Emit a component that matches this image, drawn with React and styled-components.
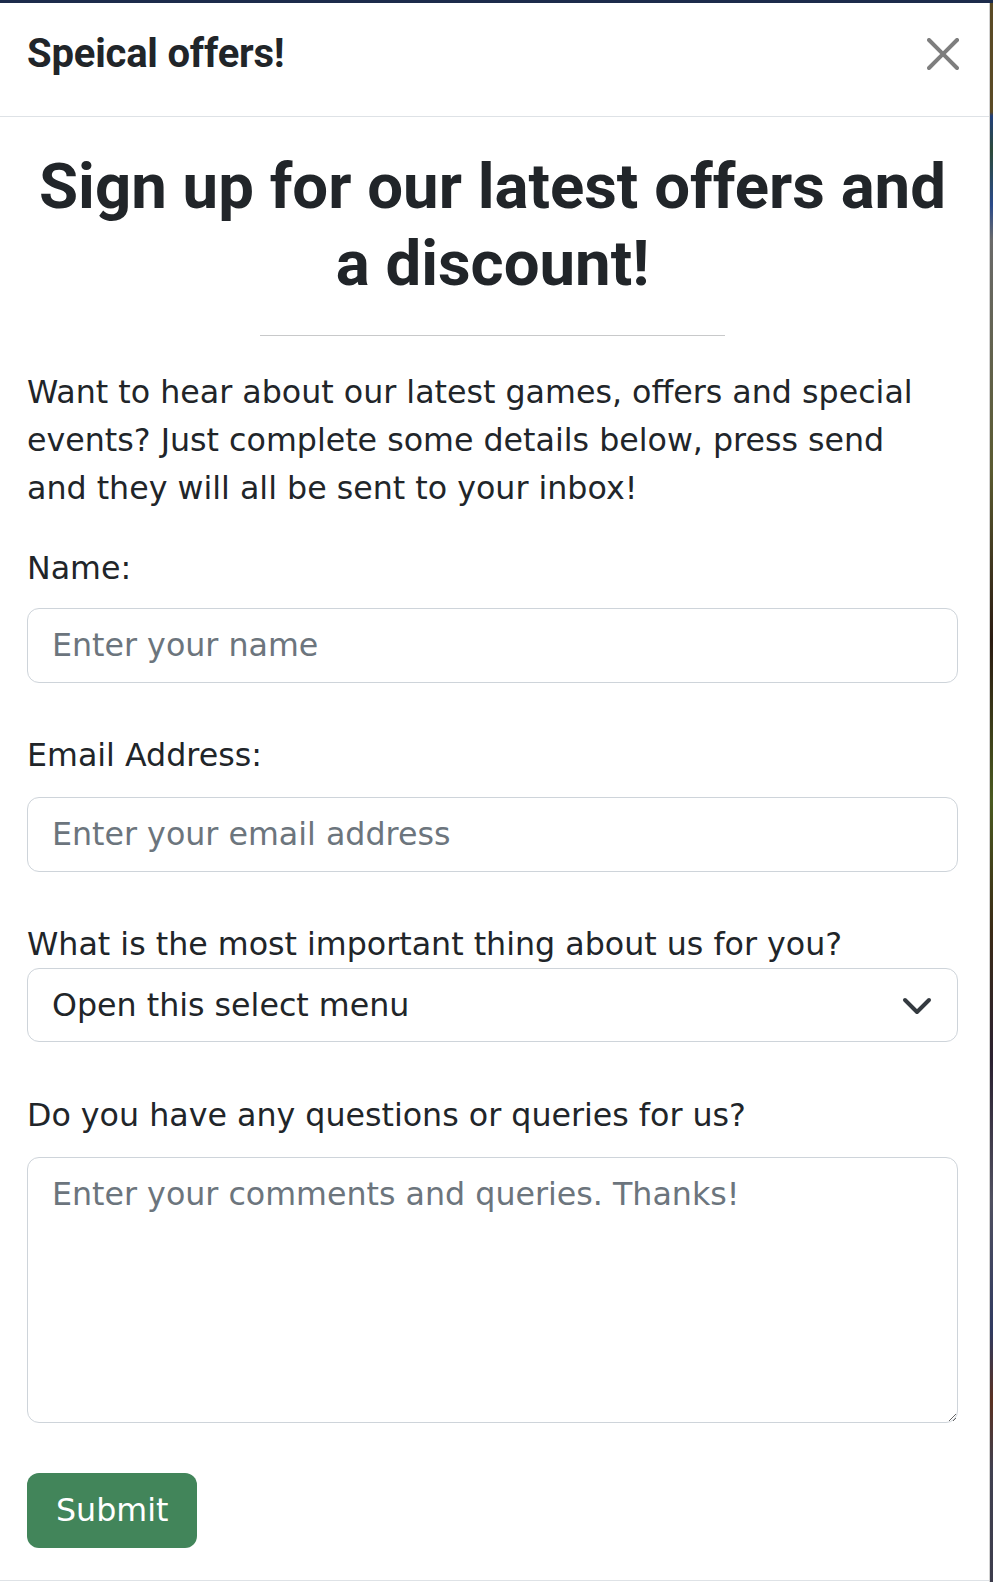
import React from 'react'
import styled, { createGlobalStyle } from 'styled-components'


const GlobalStyle = createGlobalStyle`
    html, body {
        margin: 0;
        height: 1582px;
        overflow: hidden;
    }

    body {
        background: linear-gradient(
            to bottom,
            #1c2b4b 0px, #1c2b4b 3px,
            #5a4a25 3px, #5a4a25 112px,
            #22407a 116px, #2c4a3a 150px,
            #2a4a8a 205px, #6a6a6a 240px,
            #5a5a30 470px, #2a1a10 640px,
            #4a5a20 800px, #3a2a15 930px,
            #2a2030 1060px, #505060 1200px,
            #303a60 1330px, #5a3020 1400px,
            #404050 1470px, #3c3c4c 1582px
        );
    }

    * {
        box-sizing: border-box;
    }
`

const Page = styled.div`
    padding-top: 3px;
    height: 1582px;
`

const Modal = styled.div`
    width: 990px;
    height: 100%;
    background: #ffffff;
    border-right: 1px solid rgba(0, 0, 0, 0.175);
    color: #212529;
    font-family: "DejaVu Sans", "Noto Sans", sans-serif;
    font-size: 31.7px;
`

// HEADER
const Header = styled.header`
    display: flex;
    align-items: center;
    justify-content: space-between;
    height: 114px;
    padding: 0 30px 12px 27px;
    border-bottom: 1px solid #dee2e6;
`

const Title = styled.h5`
    margin: 0;
    font-family: Roboto, "Liberation Sans", sans-serif;
    font-size: 40px;
    font-weight: 700;
    line-height: 1.2;
    letter-spacing: -0.2px;
`

const CloseButton = styled.button`
    display: flex;
    padding: 0;
    border: none;
    background: transparent;
    opacity: 0.5;
    cursor: pointer;

    svg {
        width: 32px;
        height: 32px;
    }
`

// BODY
const Body = styled.div`
    padding: 32px 31px 32px 27px;
`

const Heading = styled.h1`
    margin: 0;
    text-align: center;
    font-family: Roboto, "Liberation Sans", sans-serif;
    font-size: 63.5px;
    font-weight: 700;
    line-height: 76.8px;
`

const Divider = styled.hr`
    width: 50%;
    margin: 32px auto;
    border: none;
    border-top: 1px solid #c8c9ca;
`

const Intro = styled.p`
    margin: 0 0 32px;
    padding-right: 12px;
    line-height: 48px;
`

const Field = styled.div`
    margin-bottom: ${pr => pr.$gap}px;
`

const Label = styled.label`
    display: block;
    line-height: 48px;
    margin-bottom: ${pr => pr.$space}px;
`

const controlBase = `
    display: block;
    width: 100%;
    border: 1px solid #ced4da;
    border-radius: 12px;
    background: #ffffff;
    color: #212529;
    font-family: "DejaVu Sans", "Noto Sans", sans-serif;
    font-size: 31.7px;
    outline: none;

    &::placeholder {
        color: #6c757d;
        opacity: 1;
    }
`

const TextInput = styled.input`
    ${controlBase}
    height: 75px;
    padding: 0 24px;
`

const SelectWrap = styled.div`
    position: relative;
`

const Select = styled.select`
    ${controlBase}
    height: 74px;
    padding: 0 72px 0 24px;
    appearance: none;
    -webkit-appearance: none;
`

const Chevron = styled.svg`
    position: absolute;
    right: 25px;
    top: 50%;
    width: 32px;
    height: 32px;
    margin-top: -15px;
    pointer-events: none;
`

const TextArea = styled.textarea`
    ${controlBase}
    height: 266px;
    padding: 12px 24px;
    line-height: 48px;
    resize: vertical;
`

const SubmitButton = styled.button`
    height: 75px;
    padding: 0 29px;
    border: none;
    border-radius: 12px;
    background: #42855a;
    color: #ffffff;
    font-family: "DejaVu Sans", "Noto Sans", sans-serif;
    font-size: 31.7px;
    cursor: pointer;
`

const Footer = styled.footer`
    border-top: 1px solid #dee2e6;
    height: 40px;
`


const App = () => {
    return (
        <Page>
            <GlobalStyle />
            <Modal>
                <Header>
                    <Title>Speical offers!</Title>
                    <CloseButton aria-label="Close">
                        <svg viewBox="0 0 16 16" fill="#000">
                            <path d="M.293.293a1 1 0 0 1 1.414 0L8 6.586 14.293.293a1 1 0 1 1 1.414 1.414L9.414 8l6.293 6.293a1 1 0 0 1-1.414 1.414L8 9.414l-6.293 6.293a1 1 0 0 1-1.414-1.414L6.586 8 .293 1.707a1 1 0 0 1 0-1.414z" />
                        </svg>
                    </CloseButton>
                </Header>
                <Body>
                    <Heading>Sign up for our latest offers and a discount!</Heading>
                    <Divider />
                    <Intro>
                        Want to hear about our latest games, offers and special events? Just complete some details below, press send and they will all be sent to your inbox!
                    </Intro>
                    <form onSubmit={e => e.preventDefault()}>
                        <Field $gap={48}>
                            <Label $space={16} htmlFor="name">Name:</Label>
                            <TextInput id="name" type="text" placeholder="Enter your name" />
                        </Field>
                        <Field $gap={48}>
                            <Label $space={18} htmlFor="email">Email Address:</Label>
                            <TextInput id="email" type="email" placeholder="Enter your email address" />
                        </Field>
                        <Field $gap={49}>
                            <Label $space={0} htmlFor="important">What is the most important thing about us for you?</Label>
                            <SelectWrap>
                                <Select id="important" defaultValue="">
                                    <option value="">Open this select menu</option>
                                    <option value="games">Games</option>
                                    <option value="offers">Offers</option>
                                    <option value="events">Events</option>
                                </Select>
                                <Chevron viewBox="0 0 16 16">
                                    <path d="m2 5 6 6 6-6" fill="none" stroke="#343a40" strokeWidth="2" strokeLinecap="round" strokeLinejoin="round" />
                                </Chevron>
                            </SelectWrap>
                        </Field>
                        <Field $gap={50}>
                            <Label $space={18} htmlFor="queries">Do you have any questions or queries for us?</Label>
                            <TextArea id="queries" placeholder="Enter your comments and queries. Thanks!" />
                        </Field>
                        <SubmitButton type="submit">Submit</SubmitButton>
                    </form>
                </Body>
                <Footer />
            </Modal>
        </Page>
    )
}

export default App
